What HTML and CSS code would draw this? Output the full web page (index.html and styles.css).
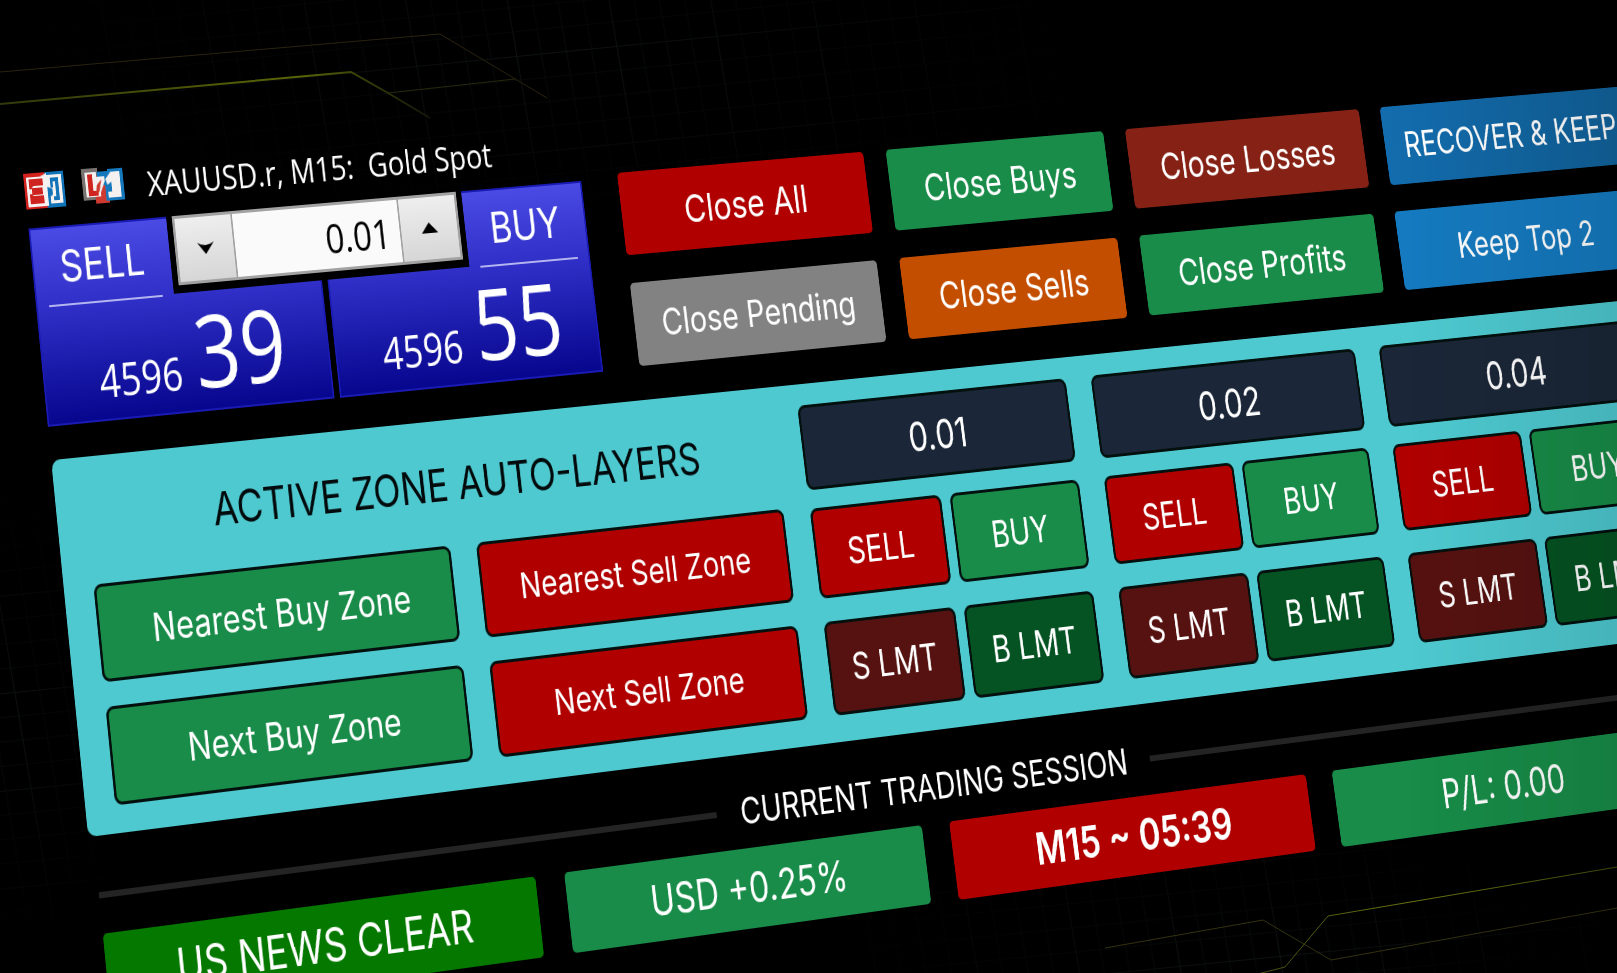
FILE: index.html
```html
<!DOCTYPE html>
<html lang="en">
<head>
<meta charset="utf-8">
<title>XAUUSD.r trade panel</title>
<link rel="stylesheet" href="styles.css">
</head>
<body>
<svg class="backdrop" aria-hidden="true" fill="none">
  <defs>
    <pattern id="mesh" width="100" height="96" patternUnits="userSpaceOnUse" patternTransform="matrix(1 -.1 .17 1 0 10)">
      <path d="M0 24H100M0 48H100M0 72H100M25 0V96M50 0V96M75 0V96" stroke="#070909"/>
      <path d="M0 0H100M0 0V96" stroke="#0e1212" stroke-width="2"/>
    </pattern>
    <radialGradient id="glow"><stop offset="0" stop-color="#fff"/><stop offset="1" stop-color="#000"/></radialGradient>
    <mask id="spots">
      <ellipse cx="560" cy="60" rx="560" ry="170" fill="url(#glow)"/>
      <ellipse cx="1250" cy="950" rx="440" ry="130" fill="url(#glow)"/>
      <ellipse cx="0" cy="720" rx="160" ry="240" fill="url(#glow)"/>
    </mask>
    <linearGradient id="limeA" gradientUnits="userSpaceOnUse" x1="0" y1="0" x2="430" y2="0"><stop offset="0" stop-color="#33380a"/><stop offset=".7" stop-color="#5a6508"/><stop offset="1" stop-color="#14160a"/></linearGradient>
    <linearGradient id="limeB" gradientUnits="userSpaceOnUse" x1="1280" y1="0" x2="1617" y2="0"><stop offset="0" stop-color="#4a5010"/><stop offset=".4" stop-color="#6a7410"/><stop offset="1" stop-color="#464c0c"/></linearGradient>
  </defs>
  <rect width="100%" height="100%" fill="url(#mesh)" mask="url(#spots)"/>
  <path d="M0 72 440 34 547 98" stroke="#29230f"/>
  <path d="M388 93 515 79" stroke="#29280f"/>
  <path d="M0 104 351 72 388 93 430 118" stroke="url(#limeA)" stroke-width="2"/>
  <path d="M1105 948 1263 920 1331 960 1617 908" stroke="#34320f"/>
  <path d="M1250 976 1285 967 1328 916 1617 867" stroke="url(#limeB)"/>
</svg>

<main class="board">
  <div class="top">
    <section class="quote-card" aria-label="Quotes">
      <header class="symbol">
        <svg class="badge" viewBox="0 0 49 36" aria-hidden="true">
          <path fill="#d3211d" d="M0 0h28v36H0z"/><path fill="#1173b8" d="M26 0h23v36H26z"/>
          <path fill="#f4f1f0" d="M3 4h17l8-3v33H3z"/>
          <path fill="#cf231f" d="M6 6h17v7H11l-2 2h13v7H9l2 1h12v8H6V21h3v-5H6z"/>
          <path fill="#f4f1f0" d="M28 3h18v29H31v-7l3-2v-6l-6-2z"/>
          <path fill="#1173b8" d="M32 6h10v23h-7v-4h3V10h-3v6h-3z"/>
        </svg>
        <svg class="badge" viewBox="0 0 51 36" aria-hidden="true">
          <path fill="#77716f" d="M0 0h20v32H0z"/><path fill="#cf3a30" d="M15 8h17v28H15z"/><path fill="#1678bc" d="M19 4h13V2h19v32H28V18h-9z"/>
          <path fill="#f4f1f0" d="M4 4h14v5h10v5l-6 11v4H4z"/>
          <path fill="#cf231f" d="M7 6h6v17h6v5H7z"/><path fill="#cf3a30" d="m18 17 6-5-4 13h-4z"/>
          <path fill="#f4f1f0" d="m36 5h11v26H31v-6h5V15l-5 3-2-6z"/>
        </svg>
        <h1>XAUUSD.r, M15:&nbsp; Gold Spot</h1>
      </header>
      <div class="quotes">
        <button class="quote sell"><span class="side">SELL</span><span class="price">4596 <b>39</b></span></button>
        <button class="quote buy"><span class="side">BUY</span><span class="price">4596 <b>55</b></span></button>
        <div class="spinner">
          <div class="spin-box">
            <button aria-label="Decrease volume"><svg viewBox="0 0 21 12"><path d="M0 0q5 3 10 3T21 0L10 12z"/></svg></button>
            <input type="text" value="0.01" aria-label="Volume">
            <button aria-label="Increase volume"><svg viewBox="0 0 21 12"><path d="M10 0 21 11H0z"/></svg></button>
          </div>
        </div>
      </div>
    </section>
    <section class="closers" aria-label="Close positions">
      <button class="red">Close All</button><button class="green">Close Buys</button><button class="rust">Close Losses</button><button class="blue deep">RECOVER &amp; KEEP</button>
      <button class="grey">Close Pending</button><button class="orange">Close Sells</button><button class="green">Close Profits</button><button class="blue">Keep Top 2</button>
    </section>
  </div>

  <section class="layers" aria-labelledby="layers-title">
    <div class="zones">
      <h2 id="layers-title">ACTIVE ZONE AUTO-LAYERS</h2>
      <div class="zone-grid">
        <button class="green">Nearest Buy Zone</button><button class="red">Nearest Sell Zone</button>
        <button class="green">Next Buy Zone</button><button class="red">Next Sell Zone</button>
      </div>
    </div>
    <div class="lot">
      <button class="navy">0.01</button>
      <div class="lot-grid"><button class="red">SELL</button><button class="green">BUY</button><button class="maroon">S LMT</button><button class="forest">B LMT</button></div>
    </div>
    <div class="lot">
      <button class="navy">0.02</button>
      <div class="lot-grid"><button class="red">SELL</button><button class="green">BUY</button><button class="maroon">S LMT</button><button class="forest">B LMT</button></div>
    </div>
    <div class="lot">
      <button class="navy">0.04</button>
      <div class="lot-grid"><button class="red">SELL</button><button class="green">BUY</button><button class="maroon">S LMT</button><button class="forest">B LMT</button></div>
    </div>
  </section>

  <section aria-labelledby="session-title">
    <h2 class="session-title" id="session-title">CURRENT TRADING SESSION</h2>
    <div class="session">
      <div class="cell news">US NEWS CLEAR</div>
      <div class="cell green">USD +0.25%</div>
      <div class="cell red timer">M15 ~ 05:39</div>
      <div class="cell green">P/L: 0.00</div>
    </div>
  </section>
</main>
</body>
</html>
```
FILE: styles.css
```css
* { box-sizing: border-box; }

body {
  margin: 0;
  height: 100vh;
  position: relative;
  overflow: hidden;
  background: #000;
  color: #fff;
  font-family: Inter, "Liberation Sans", sans-serif;
}

/* shade that deepens toward the right edge */
body::after {
  content: "";
  position: absolute;
  inset: 0;
  pointer-events: none;
  background: linear-gradient(90deg, transparent 87%, rgba(0, 0, 0, .1));
}

.backdrop {
  position: absolute;
  inset: 0;
  width: 100%;
  height: 100%;
}

/* the whole panel is one plane seen in perspective */
.board {
  position: relative;
  width: max(2228px, 137vw);
  padding: 20px;
  will-change: transform;
  transform-origin: 0 0;
  transform:
    matrix3d(.8164929, -.05834206, 0, .00005276673,
             .09679946, .9864566, 0, -.00003044955,
             0, 0, 1, 0,
             58.04026, 221.0272, 0, 1)
    translate(-57px, -72px);
}

h1, h2 { margin: 0; font-weight: 400; }

button {
  margin: 0;
  padding: 0;
  border: 0;
  color: inherit;
  font: inherit;
  white-space: nowrap;
}

.red { background: #b00000; }
.green { background: #188c48; }
.rust { background: #852215; }
.grey { background: #828282; }
.orange { background: #c44e00; }
.navy { background: #1b2738; }
.maroon { background: #561210; }
.forest { background: #055322; }
.news { background: #057800; }
.blue { background: #157abf; }
.blue.deep { background: linear-gradient(90deg, #136cad, #11629b); }

.top {
  display: flex;
  gap: 48px;
  align-items: flex-start;
}

/* quotes */
.quote-card {
  width: 702px;
  font-family: "Open Sans", "Noto Sans", sans-serif;
}

.symbol {
  display: flex;
  align-items: center;
  height: 44px;
  margin-bottom: 13px;
}

.badge {
  flex: none;
  height: 36px;
  margin: 0 22px 5px 0;
}

.symbol h1 {
  padding-left: 7px;
  font-size: 35px;
  line-height: 44px;
  white-space: nowrap;
}

.quotes {
  display: grid;
  grid-template-columns: 170px 186px 7px 182px 157px;
  grid-template-rows: 78px 120px;
}

.quote {
  grid-row: 1 / 3;
  display: flex;
  flex-direction: column;
  border: 2px solid #1a1ab4;
  background: linear-gradient(#4a4ae4, #3030c8 40%, #06068e);
}

.quote.sell { grid-column: 1 / 3; }
.quote.buy { grid-column: 4 / 6; align-items: flex-end; }

.side {
  width: 168px;
  height: 78px;
  padding: 0 14px;
  font: 44px/76px Inter, sans-serif;
}

.buy .side { width: 155px; }

.side::after {
  content: "";
  display: block;
  height: 2px;
  background: #b4b4f0;
}

.price {
  align-self: stretch;
  padding-left: 14px;
  font-size: 45px;
  line-height: 112px;
}

.price b {
  margin-left: 5px;
  font-size: 100px;
  font-weight: 400;
}

.spinner {
  grid-area: 1 / 2 / 2 / 5;
  padding: 0 7px 8px;
  background: #000;
}

.spin-box {
  display: grid;
  grid-template-columns: 72px 1fr 74px;
  height: 100%;
  border: 3px solid #a2a2a2;
  background: #fafafa;
}

.spin-box button {
  display: grid;
  place-items: center;
  background: linear-gradient(#eee, #d6d6d6);
}

.spin-box button:first-child { border-right: 2px solid #a2a2a2; }
.spin-box button:last-child { border-left: 2px solid #a2a2a2; }
.spin-box svg { width: 21px; }

.spin-box input {
  min-width: 0;
  padding: 0 12px;
  border: 0;
  background: #fafafa;
  color: #000;
  font: 42px "Open Sans", "Noto Sans", sans-serif;
  text-align: right;
}

/* close buttons */
.closers {
  flex: 1;
  display: grid;
  grid-template-columns: 331fr 303fr 336fr 374fr;
  grid-auto-rows: 86px;
  gap: 29px 31px;
  margin-top: 52px;
  font-size: 40px;
}

.closers button { border-radius: 5px; }
.closers .grey, .closers .blue { font-size: 38px; }

/* layered zones */
.layers {
  display: grid;
  grid-template-columns: 880fr 368fr 376fr 388fr;
  gap: 35px;
  margin-top: 33px;
  padding: 22px 36px 27px;
  border-radius: 10px;
  background: #4ec9d0;
  font-size: 38px;
}

.layers h2 {
  height: 85px;
  padding-left: 54px;
  color: #020a0c;
  font-size: 45px;
  line-height: 85px;
  text-align: center;
}

.layers button {
  border: 3px solid #03100e;
  border-radius: 9px;
}

.lot > button {
  width: 100%;
  height: 88px;
  font-size: 42px;
}

.zone-grid, .lot-grid {
  display: grid;
  gap: 24px 12px;
  margin-top: 19px;
}

.zone-grid {
  grid-template-columns: 445fr 402fr;
  grid-auto-rows: 96px;
  column-gap: 33px;
}

.zone-grid .green { padding-left: 10px; }
.zone-grid .red { font-size: 36px; }

.lot-grid {
  grid-template-columns: 1fr 1fr;
  grid-template-rows: 93px 96px;
}

/* session */
.session-title {
  display: flex;
  align-items: center;
  gap: 31px;
  margin: 34px 0 14px;
  padding: 0 46px 0 6px;
  font-size: 37px;
  line-height: 46px;
}

.session-title::before, .session-title::after {
  content: "";
  flex: 1;
  height: 6px;
  background: #242424;
}

.session {
  display: grid;
  grid-template-columns: 536fr 469fr 493fr 480fr;
  gap: 37px;
  padding: 0 93px 0 6px;
  font-size: 42px;
}

.cell {
  border-radius: 5px;
  line-height: 80px;
  text-align: center;
}

.news { font-size: 45px; }

.timer {
  font-size: 45px;
  font-weight: 600;
}
```
